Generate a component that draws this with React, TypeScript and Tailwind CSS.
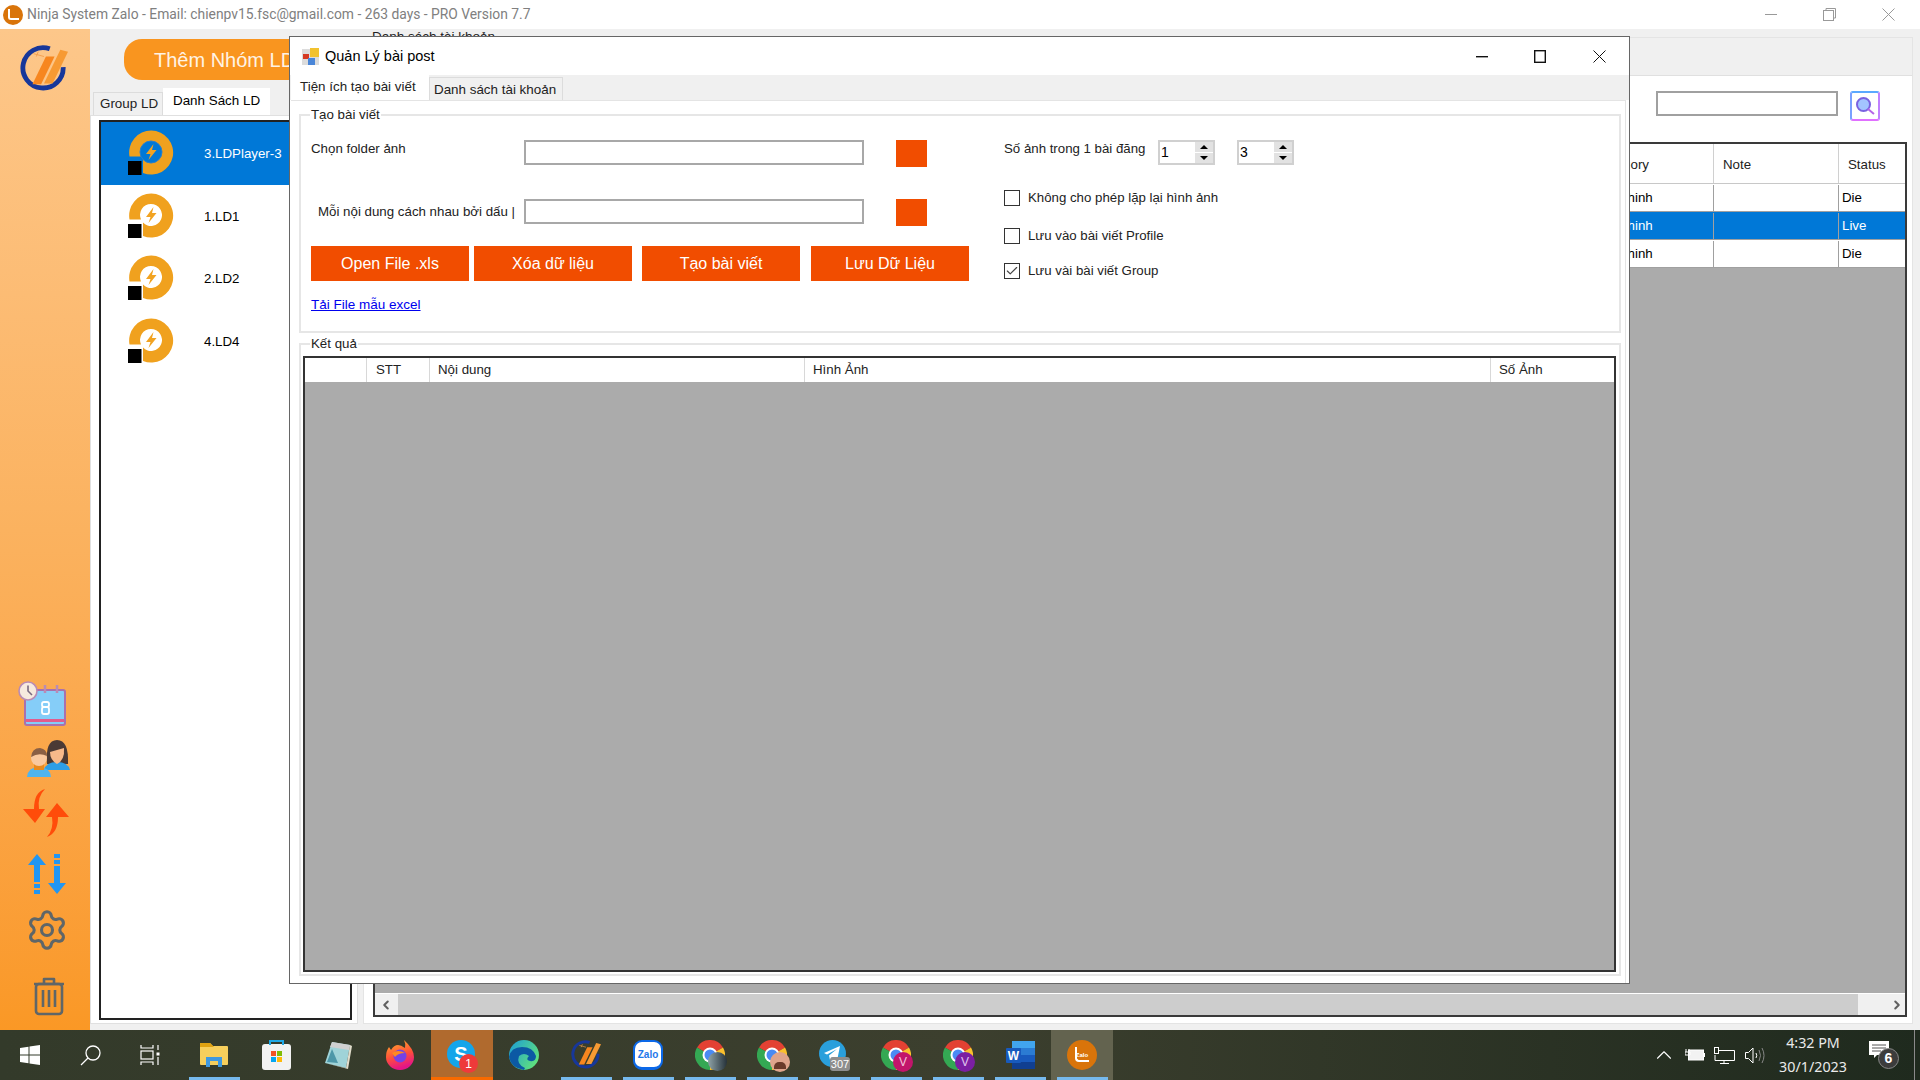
import React from "react";
import { Settings, ChevronLeft, ChevronRight, ChevronUp, Check } from "lucide-react";

const NinjaLogo = ({ size }: { size: number }) => (
  <svg width={size} height={size} viewBox="0 0 50 50">
    <path d="M31 4 A21 21 0 1 0 45 23" fill="none" stroke="#17379a" strokeWidth="5" />
    <path d="M27 12 L36 12 L22 41 L13 41 Z" fill="#f7861f" />
    <path d="M42 5 L50 7 L34 40 L25 40 Z" fill="#f79a33" />
    <path d="M14 9 L25 12 M19 7 L17 12" stroke="#f4a050" strokeWidth="1" fill="none" />
  </svg>
);

const LdIcon = ({ active }: { active?: boolean }) => (
  <svg width="46" height="46" viewBox="0 0 46 46" className="mb-[2px]">
    <path d="M1.5 27.5 A22 22 0 1 1 15 44 L15 30.5 A11 11 0 1 0 13 27.5 Z" fill="#f0a11e" />
    <path d="M25.5 15 L18 25 L22.5 25 L20.5 31 L28.5 21 L24 21 Z" fill="#f2a321" />
    <rect x="0" y="32" width="13.5" height="14" fill="#000" />
    {active ? <circle cx="23" cy="23" r="11" fill="none" stroke="#2c7fc9" strokeWidth="1" /> : null}
  </svg>
);

const CalendarIcon = () => (
  <svg width="48" height="46" viewBox="0 0 48 46">
    <rect x="7" y="9" width="40" height="35" rx="2" fill="#85cdf8" stroke="#a871ae" strokeWidth="2" />
    <rect x="8" y="38" width="38" height="3" fill="#e25c8e" />
    <path d="M27 4 v8 M39 4 v8" stroke="#b98bb5" strokeWidth="2.5" />
    <circle cx="10" cy="10" r="9" fill="#f6eadf" stroke="#b98bb5" strokeWidth="1.6" />
    <path d="M10 4.5 V10 L14 14" fill="none" stroke="#7a6a80" strokeWidth="1.6" />
    <rect x="24" y="21" width="7" height="5" rx="2" fill="none" stroke="#fff" strokeWidth="1.8" />
    <rect x="24" y="26" width="7" height="7" rx="2" fill="none" stroke="#fff" strokeWidth="1.8" />
  </svg>
);

const PeopleIcon = () => (
  <svg width="43" height="37" viewBox="0 0 43 37">
    <path d="M20 24 Q18 0 30 0 Q42 0 41 24 Z" fill="#4b3a35" />
    <path d="M17 30 Q19 22 30 22 Q41 22 43 30 Z" fill="#2e9ee6" />
    <path d="M23 12 Q30 10 37 8 Q38 20 30 24 Q23 20 23 12 Z" fill="#f7b98a" />
    <path d="M0 37 Q1 27 12 27 Q23 27 24 37 Z" fill="#4fb4ee" />
    <rect x="7" y="24" width="10" height="6" fill="#e98a1e" />
    <circle cx="12" cy="18" r="8" fill="#f9c89f" />
    <path d="M4 17 Q5 8 13 8 Q20 9 20 16 Q12 12 4 17Z" fill="#8a5f44" />
  </svg>
);

const RefreshIcon = () => (
  <svg width="48" height="48" viewBox="0 0 48 48">
    <path d="M23 0 Q12 3 12 20 L1 20 L13 34 L23 20 L17 20 Q15 8 23 0 Z" fill="#ff4c0a" />
    <path d="M25 48 Q36 44 36 28 L47 28 L35 14 L24 28 L30 28 Q32 40 25 48 Z" fill="#ff4c0a" />
  </svg>
);

const UpDownIcon = () => (
  <svg width="38" height="40" viewBox="0 0 38 40">
    <path d="M9 0 L18 11 L12 11 L12 28 L6 28 L6 11 L0 11 Z" fill="#2196f3" />
    <rect x="6" y="30" width="6" height="4" fill="#2196f3" />
    <rect x="6" y="36" width="6" height="4" fill="#2196f3" />
    <rect x="26" y="0" width="6" height="4" fill="#2196f3" />
    <rect x="26" y="6" width="6" height="4" fill="#2196f3" />
    <path d="M26 12 H32 V29 H38 L29 40 L20 29 H26 Z" fill="#2196f3" />
  </svg>
);

const TrashIcon = () => (
  <svg width="32" height="39" viewBox="0 0 32 39" fill="none" stroke="#5f6668" strokeWidth="2.6" strokeLinejoin="round">
    <path d="M1 7 H31 M11 6 V2 H21 V6" />
    <rect x="3" y="7" width="26" height="30" rx="3" />
    <path d="M10 13 V30 M16 13 V30 M22 13 V30" />
  </svg>
);

const Chrome = ({ children }: { children?: React.ReactNode }) => (
  <span className="relative block w-[30px] h-[30px]">
    <svg width="30" height="30" viewBox="0 0 30 30">
      <path d="M15 15 L2 7.5 A15 15 0 0 1 28 7.5 Z" fill="#e34133" />
      <path d="M15 15 L28 7.5 A15 15 0 0 1 15 30 Z" fill="#fbc02d" />
      <path d="M15 15 L15 30 A15 15 0 0 1 2 7.5 Z" fill="#34a853" />
      <circle cx="15" cy="15" r="7.5" fill="#fff" />
      <circle cx="15" cy="15" r="5.5" fill="#4a8af4" />
    </svg>
    {children}
  </span>
);

const WinLogo = () => (
  <svg width="20" height="20" viewBox="0 0 20 20" fill="#fff">
    <path d="M0 3 L8.5 1.8 V9.4 H0 Z M9.5 1.6 L20 0 V9.4 H9.5 Z M0 10.4 H8.5 V18.2 L0 17 Z M9.5 10.4 H20 V20 L9.5 18.4 Z" />
  </svg>
);

const SearchGlyph = () => (
  <svg width="21" height="21" viewBox="0 0 21 21" fill="none" stroke="#fff" strokeWidth="1.3">
    <circle cx="13" cy="8" r="7" />
    <path d="M8 13 L1 20" />
  </svg>
);

const TaskView = () => (
  <svg width="20" height="20" viewBox="0 0 20 20" fill="none" stroke="#fff" strokeWidth="1.2">
    <path d="M1 0 V3 H13 V0 M1 20 V17 H13 V20" />
    <rect x="1" y="6" width="12" height="8" />
    <path d="M18 0 V5 M18 12 V20" />
    <rect x="16.5" y="7.5" width="3" height="3" fill="#fff" stroke="none" />
  </svg>
);

const Explorer = () => (
  <svg width="28" height="24" viewBox="0 0 28 24">
    <path d="M0 1 Q0 0 1 0 H10 L13 3 H27 Q28 3 28 4 V21 Q28 22 27 22 H1 Q0 22 0 21 Z" fill="#f7cf5c" />
    <path d="M0 1 Q0 0 1 0 H10 L14 4 H0 Z" fill="#dfa211" />
    <path d="M6 24 V14 H22 V24 H18 V18 H10 V24 Z" fill="#3f99e0" />
  </svg>
);

const Store = () => (
  <svg width="29" height="30" viewBox="0 0 29 30">
    <rect x="0" y="4" width="29" height="26" rx="3" fill="#f2f2f2" />
    <path d="M8 5 V1 H21 V5" fill="none" stroke="#1fa8e6" strokeWidth="2" />
    <rect x="9" y="11" width="5" height="5" fill="#f35325" />
    <rect x="15" y="11" width="5" height="5" fill="#81bc06" />
    <rect x="9" y="17" width="5" height="5" fill="#05a6f0" />
    <rect x="15" y="17" width="5" height="5" fill="#ffba08" />
  </svg>
);

const Notepad = () => (
  <svg width="28" height="28" viewBox="0 0 28 28">
    <path d="M8 1 L26 4 L22 27 L1 22 Z" fill="#9fd3d8" />
    <path d="M8 1 L26 4 L25 9 L6 6 Z" fill="#d0d0d0" />
    <path d="M1 22 L22 27 L26 4 L28 5 L24 28 Z" fill="#e0dccb" />
    <path d="M8 8 L14 22 L3 21 Z" fill="#4d97a8" />
  </svg>
);

const Firefox = () => (
  <svg width="28" height="30" viewBox="0 0 28 30">
    <defs>
      <linearGradient id="ffg" x1="0" y1="0" x2="0.3" y2="1">
        <stop offset="0" stopColor="#ffb42b" />
        <stop offset="0.6" stopColor="#ff4f3a" />
        <stop offset="1" stopColor="#e31587" />
      </linearGradient>
    </defs>
    <path d="M18 0 Q28 9 28 17 A14 13 0 0 1 0 17 Q0 11 3 7 L5 10 Q8 5 12 5 Q15 5 19 8 Q20 4 18 0Z" fill="url(#ffg)" />
    <circle cx="14" cy="16" r="6.5" fill="#7542e5" />
    <path d="M6 13 Q12 9 19 13 Q12 13 9 17 Z" fill="#ff8a20" />
  </svg>
);

const Skype = () => (
  <span className="relative block w-[30px] h-[30px]">
    <span className="flex items-center justify-center w-[28px] h-[28px] rounded-full bg-[#14a5ea] text-white text-[20px] font-bold">S</span>
    <span className="absolute left-[12px] top-[14px] w-[19px] h-[19px] rounded-full bg-[#ee3a3a] text-white text-[12px] flex items-center justify-center">1</span>
  </span>
);

const Edge = () => (
  <svg width="30" height="30" viewBox="0 0 30 30">
    <defs>
      <linearGradient id="edg" x1="0" y1="0" x2="1" y2="0.6">
        <stop offset="0" stopColor="#1a9bd8" />
        <stop offset="1" stopColor="#5fe07e" />
      </linearGradient>
    </defs>
    <circle cx="15" cy="15" r="15" fill="url(#edg)" />
    <path d="M0 17 Q2 7 13 7 Q24 7 27 16 Q27 22 21 21 Q16 20 20 16 Q15 12 10 16 Q7 24 16 28 L15 30 Q2 28 0 17Z" fill="#0c59a4" />
  </svg>
);

const Zalo = () => (
  <span className="relative block w-[30px] h-[30px] rounded-[9px] bg-white border-2 border-[#0b68e8] border-b-[3px]">
    <span className="flex items-center justify-center h-full text-[10px] font-bold text-[#1f78ea]">Zalo</span>
  </span>
);

const Telegram = () => (
  <span className="relative block w-[30px] h-[30px]">
    <svg width="27" height="27" viewBox="0 0 27 27">
      <circle cx="13.5" cy="13.5" r="13.5" fill="#2a9fdc" />
      <path d="M5 13 L21 6 L18 21 L13 17 L11 20 L10 15.5 L18 9 L8 14.5 Z" fill="#fff" />
    </svg>
    <span className="absolute left-[11px] top-[17px] w-[20px] h-[14px] rounded-[3px] bg-[#8e8e8e] text-white text-[11px] leading-[14px] text-center">307</span>
  </span>
);

const Word = () => (
  <svg width="29" height="28" viewBox="0 0 29 28">
    <rect x="6" y="0" width="23" height="28" rx="1" fill="#2b7cd3" />
    <rect x="6" y="0" width="23" height="7" fill="#41a5ee" />
    <rect x="6" y="14" width="23" height="7" fill="#185abd" />
    <rect x="6" y="21" width="23" height="7" fill="#103f91" />
    <rect x="0" y="7" width="15" height="15" rx="1" fill="#185abd" />
    <text x="7.5" y="19" fontSize="12" fontWeight="700" fill="#fff" textAnchor="middle">W</text>
  </svg>
);

const ZaloApp = () => (
  <span className="relative flex items-center justify-center w-[30px] h-[30px] rounded-full bg-[#d9740a] text-white text-[6px] font-bold">
    Zalo
    <span className="absolute left-[8px] top-[7px] w-[14px] h-[15px] border-l-2 border-b-2 border-white rounded-bl-[4px]" />
  </span>
);

const TitleIcon = () => (
  <svg width="17" height="17" viewBox="0 0 17 17">
    <rect x="0" y="1" width="17" height="16" fill="#dcdcdc" />
    <rect x="1" y="6" width="6" height="5" fill="#d63a24" />
    <rect x="8" y="0" width="9" height="9" fill="#f2c22f" />
    <rect x="6" y="10" width="7" height="7" fill="#4a86d8" />
  </svg>
);

const Slot = ({ children, w = "w-[62px]", line, bg = "", lineColor = "bg-[#76b9ed]" }: { children: React.ReactNode; w?: string; line?: boolean; bg?: string; lineColor?: string }) => (
  <div className={`relative flex items-center justify-center h-full ${w} ${bg}`}>
    {children}
    {line ? <span className={`absolute bottom-0 left-[6px] right-[5px] h-[3px] ${lineColor}`} /> : null}
  </div>
);

const Spinner = ({ value, className = "" }: { value: string; className?: string }) => (
  <div className={`flex w-[57px] h-[25px] border-2 border-[#d0d0d0] bg-white ${className}`}>
    <span className="flex-1 pl-[1px] text-[14px] leading-[21px] text-black">{value}</span>
    <span className="flex flex-col w-[18px]">
      <span className="flex-1 flex items-center justify-center bg-[#e2e2e2] border-b border-white">
        <span className="w-0 h-0 border-x-[4px] border-x-transparent border-b-[4px] border-b-black" />
      </span>
      <span className="flex-1 flex items-center justify-center bg-[#e2e2e2]">
        <span className="w-0 h-0 border-x-[4px] border-x-transparent border-t-[4px] border-t-black" />
      </span>
    </span>
  </div>
);

const CheckRow = ({ label, checked, className = "" }: { label: string; checked?: boolean; className?: string }) => (
  <div className={`flex items-center h-[17px] ${className}`}>
    <span className="flex items-center justify-center w-[16px] h-[16px] border border-[#333] bg-white">
      {checked ? <Check size={14} strokeWidth={2} className="text-[#444]" /> : null}
    </span>
    <span className="ml-[8px] text-[13.25px] text-[#222]">{label}</span>
  </div>
);

const ActionBtn = ({ label, className = "" }: { label: string; className?: string }) => (
  <button className={`w-[158px] h-[35px] bg-[#f14d00] text-white text-[16px] ${className}`}>{label}</button>
);

const rows = [
  { cat: "Chinh", note: "", status: "Die", sel: false },
  { cat: "Chinh", note: "", status: "Live", sel: true },
  { cat: "Chinh", note: "", status: "Die", sel: false },
];

const ld = ["3.LDPlayer-3", "1.LD1", "2.LD2", "4.LD4"];

export default function App() {
  return (
    <div className="relative flex flex-col w-[1920px] h-[1080px] overflow-hidden bg-[#f0f0f0] font-['Liberation_Sans','Noto_Sans',sans-serif]">
      {/* app title bar */}
      <div className="flex items-center h-[29px] bg-white shrink-0">
        <span className="ml-[3px] flex items-center justify-center w-[20px] h-[20px] rounded-full bg-[#d9740a]">
          <span className="w-[11px] h-[11px] border-l-2 border-b-2 border-white rounded-bl-[3px]" />
        </span>
        <span className="ml-[4px] text-[13.85px] text-[#808080] font-['Roboto',sans-serif]">Ninja System Zalo - Email: chienpv15.fsc@gmail.com - 263 days - PRO Version 7.7</span>
        <div className="ml-auto flex items-center text-[#999]">
          <svg width="12" height="2" viewBox="0 0 12 2" className="mr-[46px]"><rect width="12" height="1" fill="#999" /></svg>
          <svg width="13" height="13" viewBox="0 0 13 13" fill="none" stroke="#999" className="mr-[46px]"><rect x="0.5" y="2.5" width="10" height="10" /><path d="M3 2.5 V0.5 H12.5 V10 H10.5" /></svg>
          <svg width="13" height="13" viewBox="0 0 13 13" fill="none" stroke="#999" className="mr-[25px]"><path d="M0.5 0.5 L12.5 12.5 M12.5 0.5 L0.5 12.5" /></svg>
        </div>
      </div>

      {/* body */}
      <div className="flex flex-1 min-h-0">
        {/* sidebar */}
        <div className="flex flex-col items-start w-[90px] shrink-0 bg-gradient-to-b from-[#fdc78a] via-[#fbb25f] to-[#fa9825]">
          <span className="ml-[20px] mt-[16px]"><NinjaLogo size={48} /></span>
          <span className="ml-[18px] mt-auto"><CalendarIcon /></span>
          <span className="ml-[27px] mt-[13px]"><PeopleIcon /></span>
          <span className="ml-[22px] mt-[12px]"><RefreshIcon /></span>
          <span className="ml-[28px] mt-[17px]"><UpDownIcon /></span>
          <Settings size={44} strokeWidth={1.7} className="ml-[25px] mt-[14px] text-[#5f6668]" />
          <span className="ml-[33px] mt-[25px] mb-[14px]"><TrashIcon /></span>
        </div>

        {/* left column */}
        <div className="flex flex-col w-[268px] shrink-0">
          <div className="ml-[34px] mt-[10px] flex items-center w-[240px] h-[41px] rounded-[18px] bg-[#f9951f] pl-[30px] text-[20px] text-[#fff3e4] whitespace-nowrap">Thêm Nhóm LD</div>
          <div className="flex items-end h-[26px] mt-[9px] pl-[3px]">
            <div className="flex items-center w-[70px] h-[23px] pl-[6px] bg-[#f0f0f0] border border-b-0 border-[#dcdcdc] text-[13.4px] text-[#222]">Group LD</div>
            <div className="flex items-center w-[107px] h-[27px] pl-[10px] bg-white text-[13.4px] text-black">Danh Sách LD</div>
          </div>
          <div className="flex-1 bg-white border border-[#e0e0e0] pt-[4px] px-[8px] pb-[3px] mb-[6px]">
            <div className="h-full w-[253px] border-2 border-[#222] bg-white">
              {ld.map((name, i) => (
                <div key={name} className={`flex items-center h-[62.5px] pl-[27px] ${i === 0 ? "bg-[#0078d7] text-white" : "text-black"}`}>
                  <LdIcon active={i === 0} />
                  <span className="ml-[30px] mt-[2px] text-[13.3px]">{name}</span>
                </div>
              ))}
            </div>
          </div>
        </div>

        {/* right column */}
        <div className="flex flex-col flex-1 ml-[5px] mr-[7px]">
          <div className="h-[8px] pl-[9px] text-[13.5px] leading-[16px] text-[#222] overflow-visible">Danh sách tài khoản</div>
          <div className="flex-1 flex flex-col border border-[#e4e4e4] mb-[6px]">
            <div className="h-[37px] bg-[#f0f0f0]" />
            <div className="flex-1 flex flex-col bg-white border-t border-[#e0e0e0] pl-[9px] pr-[5px] pb-[6px]">
              <div className="flex items-start h-[66px] pt-[15px] pl-[1283px]">
                <div className="w-[182px] h-[25px] border-2 border-[#a0a0a0] bg-white" />
                <div className="ml-[12px] flex items-center justify-center w-[30px] h-[30px] rounded-[3px] border-2 border-t-[#5aa8ff] border-l-[#7aa0ff] border-r-[#c080ff] border-b-[#e070ff]">
                  <svg width="20" height="20" viewBox="0 0 20 20">
                    <circle cx="8.5" cy="8.5" r="6.5" fill="#a3c4ff" stroke="#7a62e0" strokeWidth="2" />
                    <path d="M13 13 L19 18" stroke="#b565e8" strokeWidth="2" />
                  </svg>
                </div>
              </div>
              <div className="flex-1 flex flex-col border-2 border-[#3a3a3a] bg-[#ababab]">
                <div className="flex h-[40px] bg-white border-b border-[#c8c8c8] text-[13.3px] text-[#222]">
                  <div className="flex items-center flex-1 pt-[3px] pl-[1220px]">Category</div>
                  <div className="flex items-center w-[125px] pt-[3px] pl-[9px] border-l border-[#d0d0d0]">Note</div>
                  <div className="flex items-center w-[67px] pt-[3px] pl-[9px] border-l border-[#d0d0d0]">Status</div>
                </div>
                {rows.map((r, i) => (
                  <div key={i} className={`flex h-[28px] pt-[1px] border-b border-[#a0a0a0] text-[13.3px] ${r.sel ? "bg-[#0078d7] text-white" : "bg-white text-black"}`}>
                    <div className="flex items-center flex-1 pl-[1243px]">{r.cat}</div>
                    <div className="flex items-center w-[125px] pl-[9px] border-l border-[#a0a0a0]">{r.note}</div>
                    <div className="flex items-center w-[67px] pl-[3px] border-l border-[#a0a0a0]">{r.status}</div>
                  </div>
                ))}
                <div className="flex-1" />
                <div className="flex items-stretch h-[22px] bg-[#f0f0f0] border-t border-white">
                  <span className="flex items-center justify-center w-[23px]"><ChevronLeft size={14} strokeWidth={3.5} className="mr-[2px] text-[#606060]" /></span>
                  <span className="flex-1 bg-[#cdcdcd]" />
                  <span className="flex items-center justify-center w-[47px]"><ChevronRight size={14} strokeWidth={3.5} className="ml-[30px] text-[#606060]" /></span>
                </div>
              </div>
            </div>
          </div>
        </div>
      </div>

      {/* taskbar */}
      <div className="flex items-center h-[50px] shrink-0 bg-gradient-to-r from-[#333a2a] via-[#3c3f2e] to-[#1f2a1e]">
        <Slot w="w-[60px]"><WinLogo /></Slot>
        <Slot w="w-[60px]"><SearchGlyph /></Slot>
        <div className="flex items-center justify-start pl-[20px] h-full w-[63px]"><TaskView /></div>
        <Slot w="w-[62px]" line><Explorer /></Slot>
        <Slot w="w-[62px]"><Store /></Slot>
        <Slot w="w-[62px]"><Notepad /></Slot>
        <Slot w="w-[62px]"><Firefox /></Slot>
        <Slot w="w-[62px]" bg="bg-[#b06a2e]"><Skype /><span className="absolute bottom-0 inset-x-0 h-[3px] bg-[#f96a00]" /></Slot>
        <Slot w="w-[62px]"><Edge /></Slot>
        <Slot w="w-[62px]" line><NinjaLogo size={30} /></Slot>
        <Slot w="w-[62px]" line><Zalo /></Slot>
        <Slot w="w-[62px]" line>
          <Chrome><span className="absolute left-[13px] top-[12px] w-[19px] h-[19px] rounded-full bg-[linear-gradient(90deg,#8fa3a8,#26323a)]" /></Chrome>
        </Slot>
        <Slot w="w-[62px]" line>
          <Chrome><span className="absolute left-[13px] top-[12px] w-[20px] h-[20px] rounded-full bg-[#e0a48c] flex items-end justify-center"><span className="w-[12px] h-[7px] mb-[3px] rounded-t-[5px] bg-[#6b3a2a]" /></span></Chrome>
        </Slot>
        <Slot w="w-[62px]" line><Telegram /></Slot>
        <Slot w="w-[62px]" line>
          <Chrome><span className="absolute left-[12px] top-[12px] w-[20px] h-[20px] rounded-full bg-[#c2156b] text-[#f4c4dc] text-[12px] flex items-center justify-center">V</span></Chrome>
        </Slot>
        <Slot w="w-[62px]" line>
          <Chrome><span className="absolute left-[12px] top-[12px] w-[20px] h-[20px] rounded-full bg-[#7b1fa2] text-[#e0c4f0] text-[12px] flex items-center justify-center">V</span></Chrome>
        </Slot>
        <Slot w="w-[62px]" line><Word /></Slot>
        <Slot w="w-[62px]" line bg="bg-[#63634f]"><ZaloApp /></Slot>

        <div className="ml-auto flex items-center h-full text-white">
          <ChevronUp size={26} strokeWidth={1} className="mr-[8px]" />
          <svg width="20" height="12" viewBox="0 0 20 12" className="mr-[9px]">
            <rect x="3.5" y="1" width="15" height="10" fill="#f2f2f2" stroke="#fff" />
            <rect x="18.5" y="4" width="1.5" height="4" fill="#fff" />
            <path d="M1 0 V3 M4 0 V3 M0 3 H5 V6 H0 Z" stroke="#fff" fill="none" />
          </svg>
          <svg width="21" height="17" viewBox="0 0 21 17" fill="none" stroke="#fff" className="mr-[10px]">
            <path d="M4 3.5 H20.5 V13.5 H1 V8" />
            <rect x="0.5" y="0.5" width="4" height="6" />
            <path d="M10 13.5 V16.5 M6 16.5 H15" />
          </svg>
          <svg width="21" height="17" viewBox="0 0 21 17" fill="none" stroke="#fff" className="mr-[13px]">
            <path d="M0.5 5.5 H3.5 L8 1 V16 L3.5 11.5 H0.5 Z" />
            <path d="M11 6 Q12.5 8.5 11 11" />
            <path d="M14 3 Q17 8.5 14 14 M17 1 Q21 8.5 17 16" stroke="#888" />
          </svg>
          <div className="flex flex-col items-center w-[68px] text-[14.3px] leading-[24px] text-[#eaeaea] font-['Noto_Sans',sans-serif]">
            <span>4:32 PM</span>
            <span>30/1/2023</span>
          </div>
          <div className="relative ml-[22px] mr-[15px] w-[30px] h-[30px]">
            <svg width="20" height="18" viewBox="0 0 20 18" className="mt-[1px]">
              <path d="M0 0 H20 V14 H8 L5 17 V14 H0 Z" fill="#fff" />
              <path d="M3 4 H17 M3 7 H17 M3 10 H12" stroke="#555" strokeWidth="1" />
            </svg>
            <span className="absolute left-[9px] top-[8px] w-[21px] h-[21px] rounded-full bg-[#3c3c3c] border border-[#888] text-white text-[14px] font-bold flex items-center justify-center">6</span>
          </div>
          <span className="h-full w-px bg-[#8a8a8a]" />
          <span className="w-[5px]" />
        </div>
      </div>

      {/* dialog window */}
      <div className="absolute left-[289px] top-[36px] w-[1341px] h-[948px] flex flex-col bg-white border border-[#666]">
        <div className="flex items-center h-[38px] pt-[1px] bg-white shrink-0">
          <span className="ml-[12px]"><TitleIcon /></span>
          <span className="ml-[6px] text-[14.5px] text-black">Quản Lý bài post</span>
          <div className="ml-auto flex items-center">
            <svg width="12" height="2" viewBox="0 0 12 2" className="mr-[46px]"><rect width="12" height="1.4" fill="#111" /></svg>
            <svg width="12" height="13" viewBox="0 0 12 13" fill="none" stroke="#111" strokeWidth="1.4" className="mr-[47px]"><rect x="0.7" y="0.7" width="10.6" height="11.6" /></svg>
            <svg width="13" height="13" viewBox="0 0 13 13" fill="none" stroke="#111" className="mr-[23px]"><path d="M0.5 0.5 L12.5 12.5 M12.5 0.5 L0.5 12.5" /></svg>
          </div>
        </div>
        <div className="flex items-end h-[25px] bg-[#f0f0f0] shrink-0 pl-[1px]">
          <div className="flex items-center w-[138px] h-[26px] pl-[9px] bg-white text-[13.4px] text-[#222] whitespace-nowrap">Tiện ích tạo bài viết</div>
          <div className="flex items-center w-[134px] h-[23px] pl-[4px] pt-[2px] bg-[#f0f0f0] border-x border-t border-[#dcdcdc] text-[13.4px] text-[#222] whitespace-nowrap">Danh sách tài khoản</div>
        </div>
        <div className="flex-1 flex flex-col bg-white border-t border-r border-[#e4e4e4] mr-[3px] ml-[1px] pl-[8px] pr-[4px] pb-[7px]">
          <fieldset className="h-[227px] mt-[5px] border-2 border-[#e6e6e6] px-[10px]">
            <legend className="ml-[-1px] px-[1px] text-[13.3px] leading-[17px] text-[#222]">Tạo bài viết</legend>
            <div className="flex pt-[17px]">
              <div className="flex flex-col w-[693px]">
                <div className="flex items-start h-[27px]">
                  <span className="w-[213px] text-[13.3px] leading-[17px] text-[#222]">Chọn folder ảnh</span>
                  <span className="w-[340px] h-[25px] border-2 border-[#a8a8a8] bg-white" />
                  <span className="ml-[32px] w-[31px] h-[27px] bg-[#f14d00]" />
                </div>
                <div className="flex items-start h-[27px] mt-[32px]">
                  <span className="w-[213px] pl-[7px] mt-[4px] text-[13.3px] leading-[17px] text-[#222] whitespace-nowrap">Mỗi nội dung cách nhau bởi dấu |</span>
                  <span className="w-[340px] h-[25px] border-2 border-[#a8a8a8] bg-white" />
                  <span className="ml-[32px] w-[31px] h-[27px] bg-[#f14d00]" />
                </div>
                <div className="flex mt-[20px]">
                  <ActionBtn label="Open File .xls" />
                  <ActionBtn label="Xóa dữ liệu" className="ml-[5px]" />
                  <ActionBtn label="Tạo bài viết" className="ml-[10px]" />
                  <ActionBtn label="Lưu Dữ Liệu" className="ml-[11px]" />
                </div>
                <a className="mt-[15px] text-[13.5px] leading-[18px] text-[#0000ee] underline">Tải File mẫu excel </a>
              </div>
              <div className="flex flex-col">
                <div className="flex items-start">
                  <span className="w-[154px] text-[13.25px] leading-[17px] text-[#222] whitespace-nowrap">Số ảnh trong 1 bài đăng</span>
                  <Spinner value="1" />
                  <Spinner value="3" className="ml-[22px]" />
                </div>
                <CheckRow label="Không cho phép lặp lại hình ảnh" className="mt-[24px]" />
                <CheckRow label="Lưu vào bài viết Profile" className="mt-[21px]" />
                <CheckRow label="Lưu vài bài viết Group" checked className="mt-[18px]" />
              </div>
            </div>
          </fieldset>
          <fieldset className="flex-1 mt-[2px] border-2 border-[#e6e6e6] pl-[2px] pr-[3px] pb-[1px] min-h-0">
            <legend className="ml-[7px] px-[1px] text-[13.3px] leading-[17px] text-[#222]">Kết quả</legend>
            <div className="flex flex-col h-[616px] mt-[4px] border-2 border-[#333] bg-[#ababab]">
              <div className="flex h-[24px] bg-white text-[13.3px] text-[#222]">
                <div className="w-[61px]" />
                <div className="flex items-center w-[63px] pl-[9px] border-l border-[#d8d8d8]">STT</div>
                <div className="flex items-center w-[375px] pl-[8px] border-l border-[#d8d8d8]">Nội dung</div>
                <div className="flex items-center w-[686px] pl-[8px] border-l border-[#d8d8d8]">Hình Ảnh</div>
                <div className="flex items-center flex-1 pl-[8px] border-l border-[#d8d8d8]">Số Ảnh</div>
              </div>
            </div>
          </fieldset>
        </div>
      </div>
    </div>
  );
}
